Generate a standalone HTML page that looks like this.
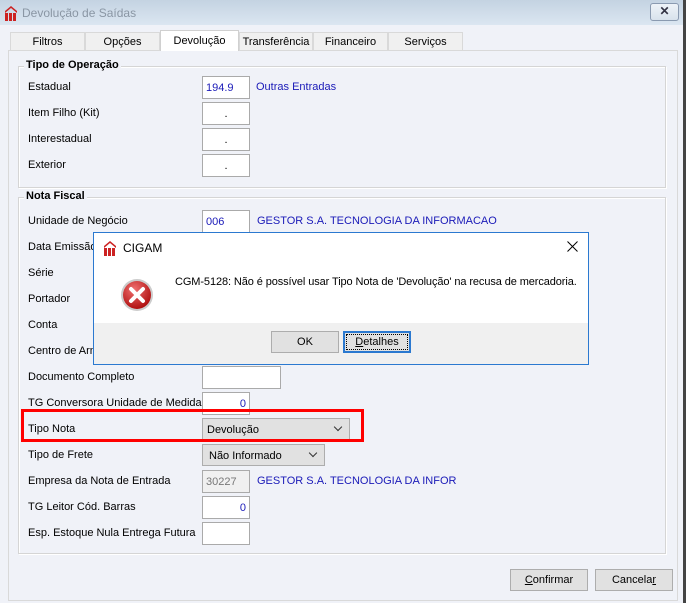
<!DOCTYPE html>
<html><head><meta charset="utf-8"><style>
*{box-sizing:border-box;margin:0;padding:0}
body{width:686px;height:603px;background:#f0f2f8;font-family:"Liberation Sans",sans-serif;font-size:11px;color:#000;position:relative;overflow:hidden}
.a{position:absolute;white-space:nowrap}
.title{left:0;top:0;width:686px;height:25px;background:linear-gradient(#c4d3e2,#dbe6f1)}
.tab{position:absolute;top:32px;height:18px;border:1px solid #d9d9d9;border-bottom:none;background:#f0f0f0;text-align:center;line-height:18px}
.panel{left:8px;top:50px;width:670px;height:551px;border:1px solid #d9d9d9;background:#f0f2f8}
.grp{border:1px solid #d5d5d5;box-shadow:1px 1px 0 #fff inset,1px 1px 0 #fff}
.in{position:absolute;height:23px;border:1px solid #aaa;background:#fff;padding:4px 3px;line-height:15px}
.lbl{position:absolute;left:28px;white-space:nowrap}
.blue{color:#1a1ab8}
.btn{position:absolute;height:22px;border:1px solid #adadad;background:#e1e1e1;text-align:center;line-height:20px}
.cb{position:absolute;height:22px;border:1px solid #adadad;background:#e1e1e1;padding:4px 4px;line-height:14px}
.cb:after{content:"";position:absolute;right:8px;top:5px;width:5px;height:5px;border-right:1px solid #333;border-bottom:1px solid #333;transform:rotate(45deg)}
</style></head><body>
<div class="a title"></div>
<svg class="a" style="left:4px;top:5px" width="14" height="16" viewBox="0 0 14 16"><path d="M1 6 L7 1 L13 6 L13 8 L7 3 L1 8Z" fill="#c22"/><rect x="1" y="8" width="3" height="8" fill="#c22"/><rect x="5" y="8" width="3" height="8" fill="#c22"/><rect x="9" y="8" width="3" height="8" fill="#c22"/></svg>
<div class="a" style="left:22px;top:6px;font-size:12px;color:#8a96a4">Devolução de Saídas</div>
<div class="a" style="left:650px;top:3px;width:29px;height:18px;border:1px solid #8a9ab0;border-radius:3px;background:linear-gradient(#eef3f8,#d8e2ec);text-align:center;line-height:15px;font-size:12px;font-weight:bold;color:#334">✕</div>
<div class="a" style="left:683px;top:0;width:3px;height:603px;background:#444"></div>
<div class="a panel"></div>
<div class="tab" style="left:10px;width:75px">Filtros</div>
<div class="tab" style="left:85px;width:75px">Opções</div>
<div class="tab" style="left:160px;width:79px;top:30px;height:21px;background:#fff;line-height:20px;border-color:#d0d0d0">Devolução</div>
<div class="tab" style="left:239px;width:74px">Transferência</div>
<div class="tab" style="left:313px;width:75px">Financeiro</div>
<div class="tab" style="left:388px;width:75px">Serviços</div>
<div class="a grp" style="left:18px;top:66px;width:648px;height:122px"></div>
<div class="a" style="left:24px;top:59px;background:#f0f2f8;padding:0 2px;font-weight:bold">Tipo de Operação</div>
<div class="a grp" style="left:18px;top:197px;width:648px;height:357px"></div>
<div class="a" style="left:24px;top:190px;background:#f0f2f8;padding:0 2px;font-weight:bold">Nota Fiscal</div>

<div class="lbl" style="top:81px">Estadual</div><div class="in blue" style="left:202px;top:76px;width:48px">194.9</div><div class="a blue" style="left:256px;top:81px">Outras Entradas</div>
<div class="lbl" style="top:107px">Item Filho (Kit)</div><div class="in" style="left:202px;top:102px;width:48px;text-align:center">.</div>
<div class="lbl" style="top:133px">Interestadual</div><div class="in" style="left:202px;top:128px;width:48px;text-align:center">.</div>
<div class="lbl" style="top:159px">Exterior</div><div class="in" style="left:202px;top:154px;width:48px;text-align:center">.</div>

<div class="lbl" style="top:215px">Unidade de Negócio</div><div class="in blue" style="left:202px;top:210px;width:48px">006</div><div class="a blue" style="left:257px;top:215px">GESTOR S.A. TECNOLOGIA DA INFORMACAO</div>
<div class="lbl" style="top:241px">Data Emissão</div>
<div class="lbl" style="top:267px">Série</div>
<div class="lbl" style="top:293px">Portador</div>
<div class="lbl" style="top:319px">Conta</div>
<div class="lbl" style="top:345px">Centro de Armazenagem</div>
<div class="lbl" style="top:371px">Documento Completo</div><div class="in" style="left:202px;top:366px;width:79px"></div>
<div class="lbl" style="top:397px">TG Conversora Unidade de Medida</div><div class="in blue" style="left:202px;top:392px;width:48px;text-align:right">0</div>
<div class="lbl" style="top:423px">Tipo Nota</div><div class="cb" style="left:202px;top:418px;width:148px">Devolução</div>
<div class="a" style="left:21px;top:409px;width:343px;height:33px;border:3px solid #f00"></div>
<div class="lbl" style="top:449px">Tipo de Frete</div><div class="cb" style="left:202px;top:444px;width:123px;padding-left:6px">Não Informado</div>
<div class="lbl" style="top:475px">Empresa da Nota de Entrada</div><div class="in" style="left:202px;top:470px;width:48px;background:#f0f0f0;color:#777">30227</div><div class="a blue" style="left:257px;top:475px">GESTOR S.A. TECNOLOGIA DA INFOR</div>
<div class="lbl" style="top:501px">TG Leitor Cód. Barras</div><div class="in blue" style="left:202px;top:496px;width:48px;text-align:right">0</div>
<div class="lbl" style="top:527px">Esp. Estoque Nula Entrega Futura</div><div class="in" style="left:202px;top:522px;width:48px"></div>

<div class="btn" style="left:510px;top:569px;width:78px"><u>C</u>onfirmar</div>
<div class="btn" style="left:595px;top:569px;width:78px">Cancela<u>r</u></div>

<div class="a" style="left:93px;top:232px;width:496px;height:133px;background:#fff;border:1px solid #2b79d0"></div>
<div class="a" style="left:94px;top:323px;width:494px;height:41px;background:#f0f0f0"></div>
<svg class="a" style="left:103px;top:240px" width="14" height="16" viewBox="0 0 14 16"><path d="M1 6 L7 1 L13 6 L13 8 L7 3 L1 8Z" fill="#c22"/><rect x="1" y="8" width="3" height="8" fill="#c22"/><rect x="5" y="8" width="3" height="8" fill="#c22"/><rect x="9" y="8" width="3" height="8" fill="#c22"/></svg>
<div class="a" style="left:123px;top:241px;font-size:12px">CIGAM</div>
<svg class="a" style="left:567px;top:241px" width="11" height="11" viewBox="0 0 11 11"><path d="M0.5 0.5 L10.5 10.5 M10.5 0.5 L0.5 10.5" stroke="#000" stroke-width="1"/></svg>
<svg class="a" style="left:120px;top:278px" width="34" height="34" viewBox="0 0 34 34"><defs><radialGradient id="g" cx="40%" cy="30%" r="70%"><stop offset="0" stop-color="#f07070"/><stop offset="1" stop-color="#b01010"/></radialGradient></defs><circle cx="17" cy="17" r="16" fill="#ccc"/><circle cx="17" cy="17" r="14" fill="url(#g)"/><path d="M11 11 L23 23 M23 11 L11 23" stroke="#fff" stroke-width="4" stroke-linecap="round"/></svg>
<div class="a" style="left:175px;top:276px;letter-spacing:-0.1px">CGM-5128: Não é possível usar Tipo Nota de 'Devolução' na recusa de mercadoria.</div>
<div class="btn" style="left:271px;top:331px;width:68px">OK</div>
<div class="btn" style="left:343px;top:331px;width:68px;border:2px solid #2b79d0;outline:1px dotted #000;outline-offset:-4px;line-height:18px"><u>D</u>etalhes</div>
</body></html>
